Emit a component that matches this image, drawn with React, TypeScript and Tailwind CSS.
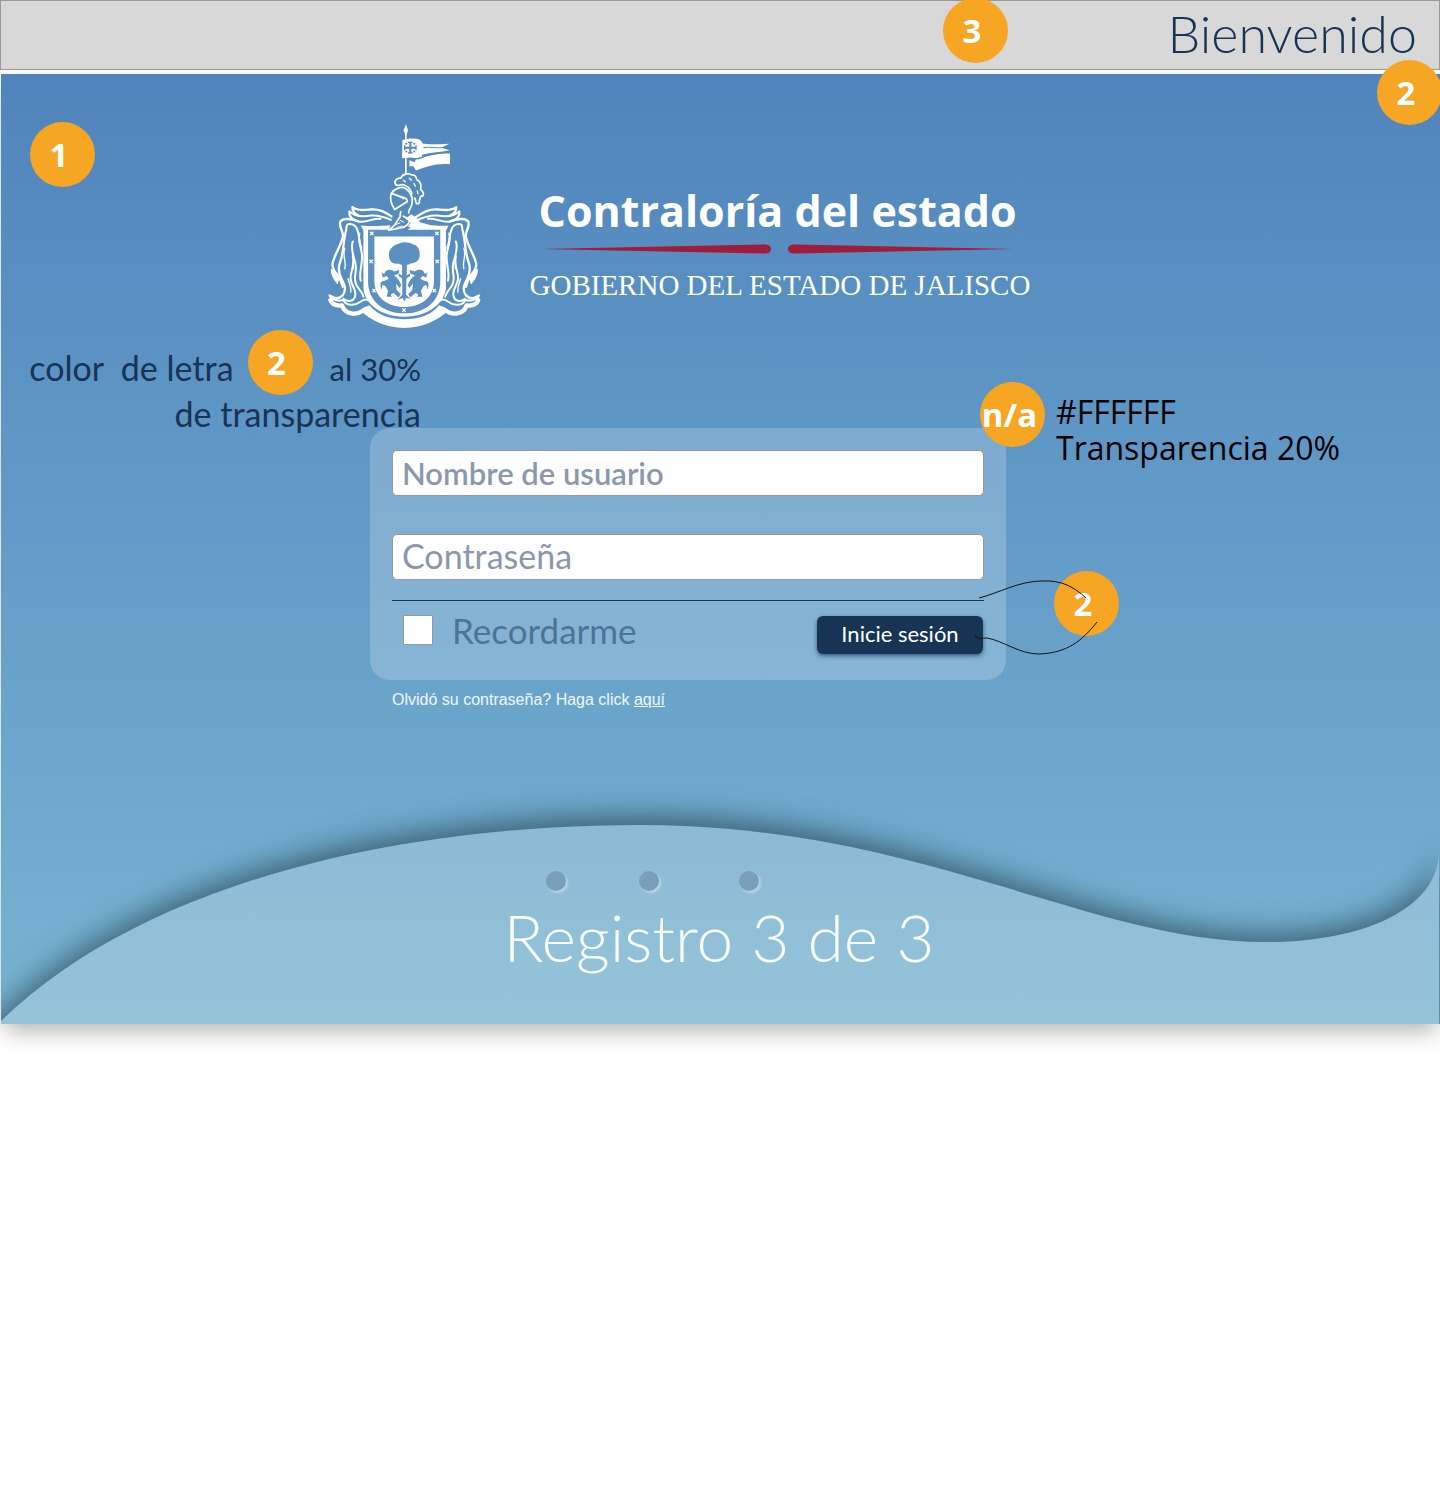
import React from "react";

function Badge({ label, className = "", shift = "pr-[7px]" }: { label: string; className?: string; shift?: string }) {
  return (
    <span
      className={`flex size-[65px] shrink-0 items-center justify-center rounded-full bg-[#f6a623] font-['Open_Sans',sans-serif] text-[33px] leading-none font-bold text-white ${shift} ${className}`}
    >
      {label}
    </span>
  );
}

function MantleHalf() {
  return (
    <g fill="none" stroke="#fff" strokeWidth="7" strokeLinecap="round" strokeLinejoin="round">
      <path d="M228 312C200 296 180 280 150 284C128 286 112 288 97 277C96 292 106 298 116 302" />
      <path d="M220 318C190 304 172 300 154 302C132 306 104 306 88 289C84 304 98 316 116 320C142 324 160 308 182 312" strokeWidth="6" />
      <path d="M116 320C96 312 70 308 61 320C54 336 72 350 68 366C62 396 42 420 37 448C36 462 44 470 52 480C60 492 66 506 68 516" />
      <path d="M76 352C82 342 76 330 84 328C98 326 108 334 112 346C118 362 116 380 124 400" strokeWidth="6" />
      <path d="M34 464C40 472 52 478 56 488L52 506C44 494 34 486 34 464Z" fill="#fff" strokeWidth="4" />
      <path d="M76 356C68 386 72 412 60 442C54 458 56 476 64 492C74 512 80 524 68 542C58 552 44 552 32 544" strokeWidth="7" />
      <path d="M98 424C106 452 88 474 92 496C98 520 112 530 104 548C98 562 82 562 70 552" strokeWidth="6" />
      <path d="M98 380C90 404 102 426 106 446C112 476 98 486 108 508C114 524 128 530 130 546" strokeWidth="6" />
      <path d="M118 356C112 384 126 398 126 426C126 456 116 474 122 498" strokeWidth="6" />
      <path d="M74 400C66 426 80 440 74 462M84 492C88 508 94 516 92 532M100 440V462" strokeWidth="4" />
      <path d="M28 542C36 556 56 560 70 556C78 574 104 574 120 562C132 552 142 552 150 560" strokeWidth="6" />
      <path d="M31 556C36 570 50 574 66 572C74 600 110 604 134 584L146 580" strokeWidth="13" />
    </g>
  );
}

function BeastHalf() {
  return (
    <path
      fill="#5b90c1"
      d="M184 470C188 480 194 478 196 470C202 462 216 464 222 470L238 466L236 476L222 482C232 488 240 500 244 512L238 520L228 506L230 526L242 538L236 548L220 534L212 540L216 546H200L204 528L196 514L188 510L184 524C178 506 182 498 194 498L206 492L200 484L188 488Z"
    />
  );
}

function Crest() {
  const stars = [
    [155, 356],
    [351, 356],
    [153, 440],
    [352, 440],
    [162, 528],
    [343, 528],
    [252, 586],
  ];
  return (
    <svg viewBox="24 24 462 622" className="h-[207px] w-[154px] shrink-0" role="img" aria-label="Escudo de Jalisco">
      <g fill="#fff">
        <path d="M258 28L264 46L260 60H256L251 46Z" />
        <rect x="255" y="58" width="5" height="118" />
        <path d="M247 76C262 70 278 70 292 72C304 74 310 84 308 94L306 126C288 132 262 128 246 130Z" />
        <path d="M300 84C330 90 352 88 388 86L364 98L389 106C360 112 336 112 304 120Z" />
        <path d="M288 132C320 122 350 116 390 116V148C350 144 320 154 288 167L280 154L268 154V136L284 142Z" />
      </g>
      <g stroke="#5589bf" fill="none" strokeWidth="4">
        <path d="M271 82V114M254 98H288" strokeWidth="6" />
        <path d="M264 82H278M264 114H278M254 91V105M288 91V105" />
        <path d="M310 98C330 94 350 102 376 97" strokeWidth="3" />
        <path d="M262 130C276 126 286 138 304 128C330 116 356 116 386 110" strokeWidth="4" />
      </g>
      <g fill="#5589bf">
        <circle cx="259" cy="86" r="3" />
        <circle cx="283" cy="86" r="3" />
        <circle cx="259" cy="110" r="3" />
        <circle cx="283" cy="110" r="3" />
      </g>

      <path
        fill="#fff"
        d="M122 332C170 336 210 332 232 330L296 320C330 334 356 334 386 332L378 348V520C372 570 322 606 253 606C184 606 134 570 130 520V348Z"
      />
      <path
        fill="#fff"
        d="M124 590L148 572C176 604 210 614 253 614C296 614 330 604 358 572L382 590C352 618 310 640 253 640C196 640 154 618 124 590Z"
      />
      <path fill="#5b90c1" d="M144 345H361V500C361 560 314 596 253 596C192 596 144 560 144 500Z" />
      <path fill="#fff" d="M163 365H342V498C342 548 304 577 253 577C202 577 163 548 163 498Z" />
      {stars.map(([x, y]) => (
        <path
          key={`${x}-${y}`}
          d={`M${x - 5} ${y - 5}L${x + 5} ${y + 5}M${x + 5} ${y - 5}L${x - 5} ${y + 5}`}
          stroke="#fff"
          strokeWidth="4"
        />
      ))}

      <g fill="#5b90c1">
        <path d="M240 385C252 380 268 382 278 388C292 390 300 404 299 418C300 436 288 446 272 446C262 452 244 452 236 446C218 450 206 438 207 420C206 402 220 390 240 385Z" />
        <path d="M246 446H261L258 540L272 552L258 550L253 560L248 550L232 556L247 540Z" />
        <path d="M236 476L253 486L270 476V484L253 496L236 484Z" />
      </g>
      <BeastHalf />
      <g transform="matrix(-1 0 0 1 507 0)">
        <BeastHalf />
      </g>

      <MantleHalf />
      <g transform="matrix(-1 0 0 1 506 0)">
        <MantleHalf />
      </g>

      <path fill="#578bc0" d="M222 286L268 292L294 318L262 346L206 350Z" />
      <g fill="none" stroke="#fff" strokeLinecap="round" strokeLinejoin="round">
        <path
          d="M228 210C220 202 228 188 242 190C246 178 266 172 274 180C286 178 290 188 290 194C302 200 304 214 302 224C310 230 312 238 308 244C300 240 302 250 298 256C300 264 296 268 290 266C286 262 288 254 284 250"
          strokeWidth="5"
        />
        <path d="M228 210C236 216 246 204 256 212C266 216 272 226 276 236" strokeWidth="5" />
        <path d="M250 196L256 200M268 190L274 196M282 206L286 214M292 228L294 236" strokeWidth="4" />
        <path d="M214 236C224 220 244 214 256 220C270 230 280 246 276 266C274 280 264 286 266 294" strokeWidth="5" />
        <path d="M214 236C208 252 216 272 224 284L262 260C262 252 258 250 252 248Z" strokeWidth="5" />
        <path d="M222 238L252 252" strokeWidth="4" />
        <path d="M242 290L240 306C232 314 228 330 216 338L206 346L240 340C262 336 270 324 268 314L250 304" strokeWidth="5" />
        <path d="M226 330L240 324M240 316L252 322M230 338L246 334" strokeWidth="3" />
      </g>
      <path fill="#fff" d="M256 312L274 298L300 318L278 338L264 336L272 322Z" />
    </svg>
  );
}

function Rule() {
  return (
    <svg viewBox="0 0 472 10" className="mt-1 ml-[11px] h-[10px] w-[472px]" aria-hidden="true">
      <path fill="#9f1c3a" d="M0 5L222 0.5Q230 0 230 5Q230 10 222 9.5Z" />
      <path fill="#9f1c3a" d="M472 5L255 0.5Q247 0 247 5Q247 10 255 9.5Z" />
    </svg>
  );
}

function Wave() {
  return (
    <svg
      viewBox="0 0 1440 250"
      preserveAspectRatio="none"
      className="absolute inset-x-0 bottom-0 h-[250px] w-full"
      aria-hidden="true"
    >
      <defs>
        <linearGradient id="wave" x1="0" y1="50" x2="0" y2="250" gradientUnits="userSpaceOnUse">
          <stop offset="0" stopColor="#8cbad6" />
          <stop offset="1" stopColor="#95c4d9" />
        </linearGradient>
      </defs>
      <path
        fill="url(#wave)"
        className="drop-shadow-[0_-9px_14px_rgba(20,40,50,0.55)]"
        d="M-40 300V285L0 247C140 111 390 51 640 51C920 51 1090 168 1265 168C1370 168 1440 131 1439 76V300Z"
      />
    </svg>
  );
}

const inputClass =
  "block h-[46px] w-full rounded-[5px] border border-[#999] bg-white px-[9px] font-['Lato',sans-serif] text-[#183454] outline-none placeholder:text-[#8b98ab] placeholder:opacity-100";

const dotClass = "size-5 rounded-full bg-[#7a9fbc] shadow-[2px_2px_3px_rgba(255,255,255,0.4)]";

export default function App() {
  return (
    <div className="min-h-screen overflow-x-hidden bg-white">
      <header className="relative z-10 flex h-[70px] items-center justify-end border border-[#999] bg-[#d8d8d8] pr-[22px] pb-1">
        <Badge label="3" className="absolute -top-[3px] right-[431px]" />
        <h1 className="font-['Lato',sans-serif] text-[52px] leading-none font-light text-[#183454]">Bienvenido</h1>
        <Badge label="2" className="absolute top-[59px] -right-[3px]" />
      </header>

      <main className="relative mt-1 ml-px flex h-[950px] flex-col items-center bg-gradient-to-b from-[#5084bc] to-[#77b5d3] pt-[49px] shadow-[0_10px_22px_-4px_rgba(0,0,0,0.32)]">
        <div className="absolute inset-0 overflow-hidden">
          <Wave />
        </div>
        <Badge label="1" className="absolute top-[48px] left-[29px]" />

        <div className="relative flex pr-[84px]">
          <Crest />
          <div className="ml-[48px] w-[500px] pt-[59px] text-white">
            <p className="pl-[9px] font-['Open_Sans',sans-serif] text-[43px] leading-[58px] font-bold whitespace-nowrap">
              Contraloría del estado
            </p>
            <Rule />
            <p className="mt-[11px] font-['Liberation_Serif',serif] text-[29px] leading-[40px] whitespace-nowrap">
              GOBIERNO DEL ESTADO DE JALISCO
            </p>
          </div>
        </div>

        <div className="relative mt-[98px] mr-[65px] w-[636px]">
          <div className="absolute right-[585px] bottom-full flex flex-col items-end font-['Lato',sans-serif] text-[34px] leading-[46px] whitespace-pre text-[#183454]">
            <div className="flex h-[65px] items-center">
              <span className="pt-[11px]">color  de letra</span>
              <Badge label="2" className="mr-[17px] ml-[14px]" />
              <span className="pt-[13px] text-[31px]">al 30%</span>
            </div>
            <p className="-mt-[4px] -mb-[9px]">de transparencia</p>
          </div>

          <form
            className="rounded-[20px] bg-white/20 px-[22px] pt-[22px] pb-[26px]"
            onSubmit={(event) => event.preventDefault()}
          >
            <input
              type="text"
              aria-label="Nombre de usuario"
              placeholder="Nombre de usuario"
              className={`${inputClass} text-[31px] font-semibold`}
            />
            <input
              type="password"
              aria-label="Contraseña"
              placeholder="Contraseña"
              className={`${inputClass} mt-[38px] pb-[3px] text-[34px]`}
            />
            <div className="mt-5 flex items-start justify-between border-t border-[#183454] pt-[14px]">
              <label className="flex h-[30px] items-center gap-[19px] pl-[11px] font-['Lato',sans-serif] text-[35px] leading-[30px] text-[#4c7398]">
                <input type="checkbox" className="size-[30px] appearance-none border border-[#999] bg-white checked:bg-[#183454]" />
                Recordarme
              </label>
              <button
                type="submit"
                className="mt-px mr-px h-[38px] w-[166px] rounded-[6px] bg-[#183454] pb-[3px] font-['Lato',sans-serif] text-[22px] leading-none text-white shadow-[0_2px_4px_rgba(24,52,100,0.7)]"
              >
                Inicie sesión
              </button>
            </div>
          </form>

          <p className="mt-2 pl-[22px] font-['Liberation_Sans',sans-serif] text-[16px] leading-6 text-white/90">
            Olvidó su contraseña? Haga click{" "}
            <a href="#recuperar" className="underline">
              aquí
            </a>
          </p>

          <Badge label="n/a" shift="pr-[6px]" className="absolute -top-[46px] -right-[39px]" />
          <div className="absolute -top-[34px] left-[686px] font-['Open_Sans',sans-serif] text-[32px] leading-[36px] whitespace-nowrap text-black">
            <p>#FFFFFF</p>
            <p>Transparencia 20%</p>
          </div>
          <Badge label="2" className="absolute top-[143px] -right-[113px]" />
          <svg
            viewBox="0 0 130 84"
            className="absolute top-[147px] left-[604px] h-[84px] w-[130px]"
            fill="none"
            stroke="#111"
            strokeWidth="1"
            aria-hidden="true"
          >
            <path d="M5 23C25 18 45 6 68 6C88 5 100 12 112 23" />
            <path d="M1 60C4 65 8 63 13 63C30 66 45 79 65 79C93 78 108 66 123 47" />
          </svg>
        </div>

        <div className="relative mt-[159px] mr-[3px] flex flex-col items-center">
          <div className="mr-[132px] flex">
            <span className={dotClass} />
            <span className={`${dotClass} mr-[80px] ml-[73px]`} />
            <span className={dotClass} />
          </div>
          <p className="mt-[8px] font-['Lato',sans-serif] text-[66px] leading-[76px] font-light text-white/95">
            Registro 3 de 3
          </p>
        </div>
      </main>
    </div>
  );
}
